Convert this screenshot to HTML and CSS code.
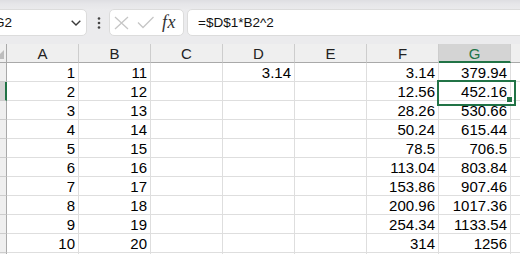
FILE: index.html
```html
<!DOCTYPE html>
<html>
<head>
<meta charset="utf-8">
<link rel="stylesheet" href="styles.css">
</head>
<body>
<div class="toolbar">
  <div class="namebox">
    <span class="name">G2</span>
    <svg class="chev" width="10" height="6" viewBox="0 0 10 6"><polyline points="0.7,0.7 5,5 9.3,0.7" fill="none" stroke="#3a3a3a" stroke-width="1.4"/></svg>
  </div>
  <div class="dots">
    <svg width="4" height="12" viewBox="0 0 4 12"><circle cx="2" cy="1.5" r="1.3" fill="#444"/><circle cx="2" cy="6" r="1.3" fill="#444"/><circle cx="2" cy="10.5" r="1.3" fill="#444"/></svg>
  </div>
  <div class="fbtns">
    <svg class="ico-x" width="15" height="14" viewBox="0 0 15 14"><path d="M1 1 L14 13 M14 1 L1 13" stroke="#c6c6c6" stroke-width="1.3" fill="none"/></svg>
    <svg class="ico-ok" width="17" height="13" viewBox="0 0 17 13"><polyline points="1,6.5 6,11.5 16.5,1" stroke="#c6c6c6" stroke-width="1.3" fill="none"/></svg>
    <span class="fx">fx</span>
  </div>
  <div class="formula">=$D$1*B2^2</div>
</div>
<div class="sheet">
  <div class="h corner"><span class="tri"></span></div><div class="h">A</div><div class="h">B</div><div class="h">C</div><div class="h">D</div><div class="h">E</div><div class="h">F</div><div class="h sel">G</div><div class="h"></div>

  <div class="rh"></div><div class="c">1</div><div class="c">11</div><div class="c"></div><div class="c">3.14</div><div class="c"></div><div class="c">3.14</div><div class="c">379.94</div><div class="c"></div>
  <div class="rh sel"></div><div class="c">2</div><div class="c">12</div><div class="c"></div><div class="c"></div><div class="c"></div><div class="c">12.56</div><div class="c active">452.16<span class="handle"></span></div><div class="c"></div>
  <div class="rh"></div><div class="c">3</div><div class="c">13</div><div class="c"></div><div class="c"></div><div class="c"></div><div class="c">28.26</div><div class="c">530.66</div><div class="c"></div>
  <div class="rh"></div><div class="c">4</div><div class="c">14</div><div class="c"></div><div class="c"></div><div class="c"></div><div class="c">50.24</div><div class="c">615.44</div><div class="c"></div>
  <div class="rh"></div><div class="c">5</div><div class="c">15</div><div class="c"></div><div class="c"></div><div class="c"></div><div class="c">78.5</div><div class="c">706.5</div><div class="c"></div>
  <div class="rh"></div><div class="c">6</div><div class="c">16</div><div class="c"></div><div class="c"></div><div class="c"></div><div class="c">113.04</div><div class="c">803.84</div><div class="c"></div>
  <div class="rh"></div><div class="c">7</div><div class="c">17</div><div class="c"></div><div class="c"></div><div class="c"></div><div class="c">153.86</div><div class="c">907.46</div><div class="c"></div>
  <div class="rh"></div><div class="c">8</div><div class="c">18</div><div class="c"></div><div class="c"></div><div class="c"></div><div class="c">200.96</div><div class="c">1017.36</div><div class="c"></div>
  <div class="rh"></div><div class="c">9</div><div class="c">19</div><div class="c"></div><div class="c"></div><div class="c"></div><div class="c">254.34</div><div class="c">1133.54</div><div class="c"></div>
  <div class="rh"></div><div class="c">10</div><div class="c">20</div><div class="c"></div><div class="c"></div><div class="c"></div><div class="c">314</div><div class="c">1256</div><div class="c"></div>
  <div class="rh"></div><div class="c"></div><div class="c"></div><div class="c"></div><div class="c"></div><div class="c"></div><div class="c"></div><div class="c"></div><div class="c"></div>
</div>
</body>
</html>
```
FILE: styles.css
```css
* { box-sizing: border-box; }
html, body { margin: 0; padding: 0; }
body {
  width: 520px;
  height: 254px;
  overflow: hidden;
  background: #ffffff;
  font-family: "Liberation Sans", Arial, sans-serif;
  color: #000;
}
.toolbar {
  height: 44px;
  display: flex;
  align-items: center;
  padding-top: 1px;
  background: linear-gradient(#dedee2 0, #e6e6e9 4px, #ebebed 10px, #ebebed 100%);
}
.namebox {
  margin-left: -22px;
  width: 109px;
  height: 27px;
  background: #fff;
  border: 1px solid #dcdcdc;
  border-radius: 5px;
  display: flex;
  align-items: center;
  justify-content: space-between;
  padding: 0 5px 0 15px;
  font-size: 13.5px;
  color: #111;
}
.chev { margin-top: 1px; }
.dots {
  width: 22px;
  display: flex;
  justify-content: center;
  padding-left: 1px;
}
.fbtns {
  width: 75px;
  height: 27px;
  background: #fff;
  border: 1px solid #dcdcdc;
  border-radius: 5px;
  display: flex;
  align-items: center;
  padding-left: 3px;
}
.ico-x { margin-left: 1px; }
.ico-ok { margin-left: 8px; }
.fx {
  margin-left: 8px;
  font-family: "Liberation Serif", "Times New Roman", serif;
  font-style: italic;
  font-size: 18px;
  color: #333;
  letter-spacing: 0.5px;
}
.formula {
  margin-left: 3px;
  margin-right: -10px;
  flex: 1;
  height: 27px;
  background: #fff;
  border: 1px solid #dcdcdc;
  border-radius: 5px;
  display: flex;
  align-items: center;
  padding-left: 10px;
  font-size: 13.5px;
  color: #111;
}
.sheet {
  display: grid;
  grid-template-columns: 7px repeat(8, 72px);
  grid-auto-rows: 19px;
  font-size: 15px;
}
.h {
  background: #efefef;
  border-right: 1px solid #cdcdcd;
  border-bottom: 1px solid #a9a9a9;
  text-align: center;
  line-height: 16px;
  padding-top: 2px;
  color: #222;
}
.h.corner {
  position: relative;
  border-right: 1px solid #a9a9a9;
}
.tri {
  position: absolute;
  right: 2px;
  bottom: 3px;
  width: 9px;
  height: 9px;
  background: #bdbdbd;
  clip-path: polygon(100% 0, 100% 100%, 0 100%);
}
.h.sel {
  background: #d4d4d4;
  color: #217346;
  border-bottom: 2px solid #217346;
}
.rh {
  background: #efefef;
  border-right: 1px solid #a9a9a9;
  border-bottom: 1px solid #cdcdcd;
}
.rh.sel {
  background: #d4d4d4;
  border-right: 2px solid #217346;
}
.c {
  border-right: 1px solid #dedede;
  border-bottom: 1px solid #dedede;
  text-align: right;
  padding: 1px 3px 0 0;
  line-height: 18px;
  white-space: nowrap;
}
.c.active {
  position: relative;
}
.c.active::before {
  content: "";
  position: absolute;
  left: -2px;
  top: -2px;
  width: 75px;
  height: 22px;
  border: 2px solid #217346;
}
.handle {
  position: absolute;
  left: 67px;
  top: 14px;
  width: 7px;
  height: 7px;
  background: #217346;
  border: 1px solid #fff;
}
```
